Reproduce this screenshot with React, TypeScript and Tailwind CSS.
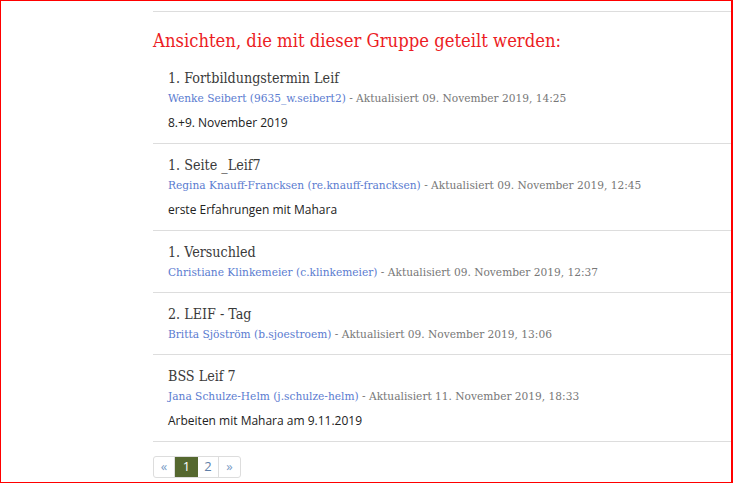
const views = [
  {
    title: "1. Fortbildungstermin Leif",
    owner: "Wenke Seibert (9635_w.seibert2)",
    updated: "Aktualisiert 09. November 2019, 14:25",
    description: "8.+9. November 2019",
  },
  {
    title: "1. Seite _Leif7",
    owner: "Regina Knauff-Francksen (re.knauff-francksen)",
    updated: "Aktualisiert 09. November 2019, 12:45",
    description: "erste Erfahrungen mit Mahara",
  },
  {
    title: "1. Versuchled",
    owner: "Christiane Klinkemeier (c.klinkemeier)",
    updated: "Aktualisiert 09. November 2019, 12:37",
  },
  {
    title: "2. LEIF - Tag",
    owner: "Britta Sjöström (b.sjoestroem)",
    updated: "Aktualisiert 09. November 2019, 13:06",
  },
  {
    title: "BSS Leif 7",
    owner: "Jana Schulze-Helm (j.schulze-helm)",
    updated: "Aktualisiert 11. November 2019, 18:33",
    description: "Arbeiten mit Mahara am 9.11.2019",
  },
];

const slab = "font-['DejaVu_Serif','Liberation_Serif',serif] [font-stretch:condensed]";
const sans = "font-['Open_Sans','Noto_Sans',sans-serif]";

export default function App() {
  return (
    <div className="w-[733px] h-[483px] bg-white border border-[#ff0000] border-r-2 overflow-hidden">
      <div className="ml-[152px] mt-[10px] border-t border-[#dddddd]">
        <h2
          className={`${slab} font-light text-[18.3px] leading-[28px] text-[#ec1c24] pt-[15px] pb-[2px]`}
        >
          Ansichten, die mit dieser Gruppe geteilt werden:
        </h2>

        <ul>
          {views.map((v) => (
            <li
              key={v.title}
              className="px-[15px] pt-[11px] pb-[10px] border-b border-[#dddddd]"
            >
              <p className={`${slab} text-[14.2px] leading-[20px] text-[#3a3a3a]`}>
                {v.title}
              </p>
              <p className={`${slab} text-[11.8px] leading-[20px] text-[#777777]`}>
                <span className="text-[#5a7bd0]">{v.owner}</span> - {v.updated}
              </p>
              {v.description && (
                <p className={`${sans} text-[12px] leading-[20px] text-[#222222] mt-[5px]`}>
                  {v.description}
                </p>
              )}
            </li>
          ))}
        </ul>

        <div
          className={`${sans} mt-[14px] inline-flex h-[22px] border border-[#dddddd] rounded-[3px] text-[13px] overflow-hidden`}
        >
          <span className="w-[21px] flex items-center justify-center text-[#7a9cc6] border-r border-[#dddddd]">
            «
          </span>
          <span className="w-[23px] flex items-center justify-center bg-[#55682f] text-white">
            1
          </span>
          <span className="w-[21px] flex items-center justify-center text-[#5f7fa8] border-r border-[#dddddd]">
            2
          </span>
          <span className="w-[21px] flex items-center justify-center text-[#7a9cc6]">
            »
          </span>
        </div>
      </div>
    </div>
  );
}
